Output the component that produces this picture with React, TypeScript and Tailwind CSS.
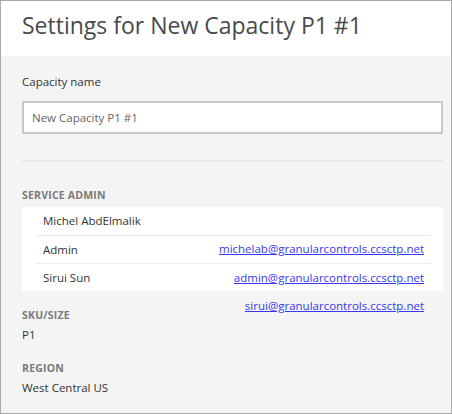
import React from "react";

const font = { fontFamily: '"Open Sans", "Noto Sans", sans-serif' };

const admins = [
  { name: "Michel AbdElmalik", email: "michelab@granularcontrols.ccsctp.net" },
  { name: "Admin", email: "admin@granularcontrols.ccsctp.net" },
  { name: "Sirui Sun", email: "sirui@granularcontrols.ccsctp.net" },
];

export default function App() {
  return (
    <div
      className="w-[452px] h-[414px] border border-[#a8a8a8] bg-[#f4f4f4] overflow-hidden flex flex-col"
      style={font}
    >
      <div className="bg-white h-[55px] pl-[21px] flex items-start pt-[8px] shrink-0">
        <h1 className="text-[23px] leading-[32px] text-[#4a4a4a] font-normal">
          Settings for New Capacity P1 #1
        </h1>
      </div>
      <div className="pl-[21px] pr-[8px] flex flex-col">
        <div className="mt-[17px] text-[11.5px] leading-[18px] text-[#333]">Capacity name</div>
        <div className="mt-[10px] h-[33px] border-2 border-[#c8c8c8] bg-white flex items-center px-[8px] text-[11.5px] text-[#666]">
          New Capacity P1 #1
        </div>
        <div className="mt-[26px] h-[2px] bg-[#e8e8e8]" />
        <div className="mt-[25px] text-[10.5px] leading-[16px] font-bold text-[#7a7a7a] tracking-[0.2px]">
          SERVICE ADMIN
        </div>
        <div className="mt-[4px] bg-white pl-[14px] pr-[12px] flex flex-col">
          {admins.map((a, i) => (
            <div
              key={a.name}
              className={`h-[28px] flex items-center justify-between px-[7px] text-[11.5px] ${
                i > 0 ? "border-t border-[#ececec]" : ""
              }`}
            >
              <span className="text-[#333]">{a.name}</span>
              <a href="#" className="text-[#3838f2] underline translate-y-[28px]">
                {a.email}
              </a>
            </div>
          ))}
        </div>
        <div className="mt-[16px] text-[10.5px] leading-[16px] font-bold text-[#7a7a7a] tracking-[0.2px]">
          SKU/SIZE
        </div>
        <div className="mt-[3px] text-[11.5px] leading-[18px] text-[#333]">P1</div>
        <div className="mt-[16px] text-[10.5px] leading-[16px] font-bold text-[#7a7a7a] tracking-[0.2px]">
          REGION
        </div>
        <div className="mt-[3px] text-[11.5px] leading-[18px] text-[#333]">West Central US</div>
      </div>
    </div>
  );
}
